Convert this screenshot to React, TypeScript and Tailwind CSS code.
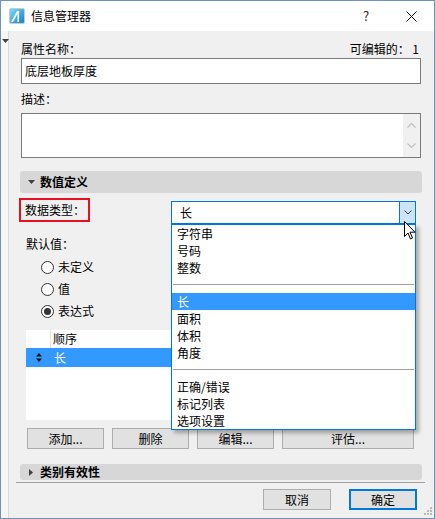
import React from 'react';

// Info manager dialog with the data type dropdown opened

const Radio = ({ checked, label }: { checked?: boolean; label: string }) => (
  <div className="flex items-center h-[22px] pl-[20px]">
    <span className="w-[13px] h-[13px] rounded-full border border-[#333333] bg-white flex items-center justify-center">
      {checked && <span className="w-[7px] h-[7px] rounded-full bg-[#333333]" />}
    </span>
    <span className="ml-[4px] leading-[16px]">{label}</span>
  </div>
);

const Btn = ({ label, w, primary }: { label: string; w: string; primary?: boolean }) => (
  <div
    className={`${w} h-[21px] flex items-center justify-center bg-[#e1e1e1] leading-[16px] ${
      primary ? 'border-2 border-[#0078d7]' : 'border border-[#adadad]'
    }`}
  >
    {label}
  </div>
);

const TriDown = () => (
  <svg width="7" height="4" viewBox="0 0 7 4" className="shrink-0">
    <path d="M0 0 L7 0 L3.5 4 Z" fill="#404040" />
  </svg>
);

const TriRight = () => (
  <svg width="4" height="7" viewBox="0 0 4 7" className="shrink-0">
    <path d="M0 0 L4 3.5 L0 7 Z" fill="#404040" />
  </svg>
);

const listItems: (string | null)[] = ['字符串', '号码', '整数', null, '长', '面积', '体积', '角度', null, '正确/错误', '标记列表', '选项设置'];

export default function App() {
  return (
    <div className="w-[435px] h-[519px] border border-[#7092be] bg-white flex flex-col relative text-[12px] text-black font-['Noto_Sans_CJK_SC','Microsoft_YaHei',sans-serif] overflow-hidden">
      {/* title bar */}
      <div className="h-[30px] flex items-center pl-[8px] shrink-0">
        <svg width="16" height="16" viewBox="0 0 16 16">
          <defs>
            <linearGradient id="ic" x1="0" y1="0" x2="1" y2="1">
              <stop offset="0" stopColor="#7fe0fb" />
              <stop offset="1" stopColor="#0d7fc9" />
            </linearGradient>
          </defs>
          <rect x="0.5" y="0.5" width="15" height="15" rx="1.5" fill="url(#ic)" stroke="#c9c9c9" />
          <path d="M2 14 L8 3 L10 3 L10 14 L8.5 14 L8.5 6 L4 14 Z" fill="#ffffff" />
        </svg>
        <span className="ml-[6px] leading-[16px]">信息管理器</span>
        <span className="ml-auto text-[13px] text-[#222] w-[10px] text-center">?</span>
        <svg width="11" height="11" viewBox="0 0 11 11" className="ml-[35px] mr-[17px]">
          <path d="M0.5 0.5 L10.5 10.5 M10.5 0.5 L0.5 10.5" stroke="#111" strokeWidth="1" />
        </svg>
      </div>

      <div className="flex-1 flex min-h-0">
        {/* left strip */}
        <div className="w-[8px] bg-[#f7f7f7] border-r border-[#d9d9d9] shrink-0 pt-[8px] pl-[1px]">
          <TriDown />
        </div>

        {/* main */}
        <div className="flex-1 bg-[#f0f0f0] pl-[12px] pr-[13px] flex flex-col relative">
          <div className="mt-[10px] h-[16px] flex justify-between leading-[16px]">
            <span>属性名称：</span>
            <span className="mr-[2px]">可编辑的： 1</span>
          </div>
          <div className="mt-[1px] h-[26px] border border-[#7a7a7a] bg-white pl-[3px] flex items-center leading-[16px]">
            底层地板厚度
          </div>

          <div className="mt-[7px] h-[16px] leading-[16px]">描述：</div>
          <div className="mt-[6px] h-[45px] border border-[#7a7a7a] bg-white flex">
            <div className="flex-1" />
            <div className="w-[17px] bg-[#f0f0f0] flex flex-col items-center justify-between py-[9px]">
              <svg width="9" height="5" viewBox="0 0 9 5">
                <path d="M0.5 4.5 L4.5 0.5 L8.5 4.5" stroke="#c2c2c2" strokeWidth="1.3" fill="none" />
              </svg>
              <svg width="9" height="5" viewBox="0 0 9 5">
                <path d="M0.5 0.5 L4.5 4.5 L8.5 0.5" stroke="#c2c2c2" strokeWidth="1.3" fill="none" />
              </svg>
            </div>
          </div>

          <div className="mt-[13px] h-[22px] -mx-[1px] rounded-[3px] bg-[#d7d7d7] flex items-center pl-[8px]">
            <TriDown />
            <span className="ml-[5px] font-bold leading-[16px]">数值定义</span>
          </div>

          <div className="mt-[5px] flex items-start">
            <div className="-ml-[2px] w-[71px] h-[24px] border-2 border-[#e81123] pl-[4px] flex items-center leading-[16px]">
              数据类型：
            </div>
            <div className="ml-auto mr-[5px] mt-[3px] w-[245px] h-[23px] border border-[#0078d7] bg-white flex">
              <span className="flex-1 pl-[8px] flex items-center leading-[16px]">长</span>
              <div className="w-[16px] bg-[#cce4f7] border-l border-[#0078d7] flex items-center justify-center">
                <svg width="8" height="5" viewBox="0 0 8 5">
                  <path d="M0.5 0.5 L4 4 L7.5 0.5" stroke="#404040" strokeWidth="1" fill="none" />
                </svg>
              </div>
            </div>
          </div>

          <div className="mt-[12px] h-[16px] pl-[5px] leading-[16px]">默认值：</div>
          <div className="mt-[4px] flex flex-col">
            <Radio label="未定义" />
            <Radio label="值" />
            <Radio label="表达式" checked />
          </div>

          <div className="mt-[8px] ml-[5px] mr-[10px] h-[90px] bg-white flex flex-col">
            <div className="h-[18px] flex">
              <div className="w-[25px] border-r border-[#e5e5e5]" />
              <span className="pl-[2px] leading-[18px]">顺序</span>
            </div>
            <div className="h-[19px] bg-[#3399ff] flex items-center text-white">
              <div className="w-[28px] pl-[10px] flex items-center">
                <svg width="6" height="9" viewBox="0 0 6 9">
                  <path d="M0 3.5 L3 0 L6 3.5 Z M0 5.5 L3 9 L6 5.5 Z" fill="#111" />
                </svg>
              </div>
              <span className="leading-[16px]">长</span>
            </div>
          </div>

          <div className="mt-[8px] ml-[6px] flex gap-[8px]">
            <Btn label="添加..." w="w-[77px]" />
            <Btn label="删除" w="w-[77px]" />
            <Btn label="编辑..." w="w-[77px]" />
            <Btn label="评估..." w="w-[132px]" />
          </div>

          <div className="mt-[15px] h-[16px] -mx-[1px] rounded-[3px] bg-[#d7d7d7] flex items-center pl-[9px]">
            <TriRight />
            <span className="ml-[7px] font-bold leading-[16px]">类别有效性</span>
          </div>
          <div className="mt-[2px] h-[1px] -ml-[5px] -mr-[4px] bg-[#a0a0a0]" />

          <div className="mt-[6px] mr-[4px] flex justify-end gap-[18px]">
            <Btn label="取消" w="w-[68px]" />
            <Btn label="确定" w="w-[68px]" primary />
          </div>

          {/* opened dropdown list */}
          <div className="absolute left-[162px] top-[193px] w-[245px] h-[206px] bg-white border border-[#0078d7] shadow-[3px_3px_4px_rgba(0,0,0,0.3)] flex flex-col">
            {listItems.map((item, i) =>
              item === null ? (
                <div key={i} className="h-[17px] flex items-center px-[1px]">
                  <div className="h-[1px] flex-1 bg-[#a0a0a0]" />
                </div>
              ) : (
                <div
                  key={i}
                  className={`h-[17px] pl-[5px] flex items-center leading-[16px] ${
                    item === '长' ? 'bg-[#3399ff] text-white' : ''
                  }`}
                >
                  {item}
                </div>
              )
            )}
          </div>

          {/* mouse cursor */}
          <svg width="12" height="19" viewBox="0 0 12 19" className="absolute left-[395px] top-[190px]">
            <path d="M0.5 0.5 L0.5 15.5 L4 12 L6.5 18 L8.5 17 L6 11.2 L11 11.2 Z" fill="#ffffff" stroke="#000" strokeWidth="1" />
          </svg>

          {/* resize grip */}
          <svg width="10" height="10" viewBox="0 0 10 10" className="absolute right-[1px] bottom-[2px]">
            <g fill="#b8b8b8">
              <rect x="7" y="1" width="2" height="2" />
              <rect x="4" y="4" width="2" height="2" />
              <rect x="7" y="4" width="2" height="2" />
              <rect x="1" y="7" width="2" height="2" />
              <rect x="4" y="7" width="2" height="2" />
              <rect x="7" y="7" width="2" height="2" />
            </g>
          </svg>
        </div>
      </div>
    </div>
  );
}
